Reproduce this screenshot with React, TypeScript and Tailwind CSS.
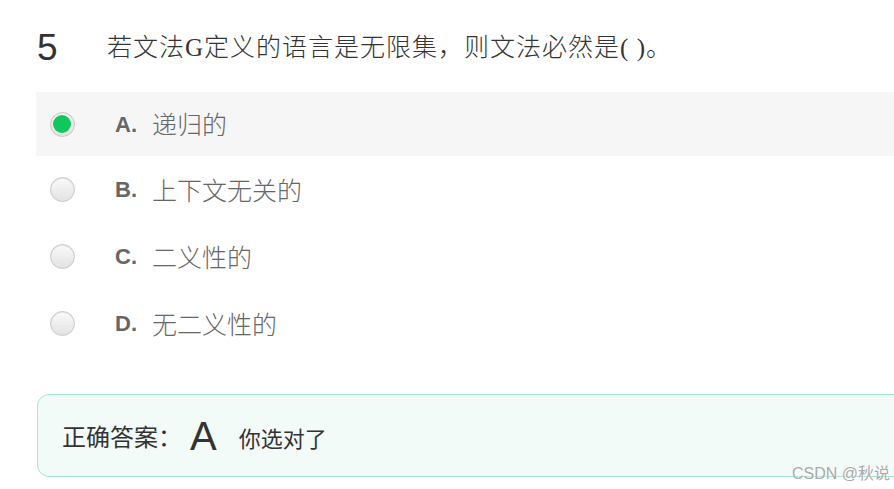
const OPTIONS = [
  { key: "A", text: "递归的", picked: true },
  { key: "B", text: "上下文无关的", picked: false },
  { key: "C", text: "二义性的", picked: false },
  { key: "D", text: "无二义性的", picked: false },
];

function Radio({ picked }: { picked: boolean }) {
  return (
    <span className="flex h-[25px] w-[25px] items-center justify-center rounded-full border border-[#c8c8c8] bg-gradient-to-b from-[#fafafa] to-[#e2e2e2] shadow-[inset_0_1px_1px_rgba(0,0,0,0.08)]">
      {picked ? <span className="h-[18px] w-[18px] rounded-full bg-[#11c65a]" /> : null}
    </span>
  );
}

export default function App() {
  return (
    <div className="relative h-[489px] w-[894px] overflow-hidden bg-white">
      <div className="flex items-center pt-[28px]">
        <span className="w-[107px] pl-[37px] font-['Liberation_Sans',Arial,sans-serif] text-[37px] leading-[40px] text-[#333]">
          5
        </span>
        <span className="font-['Liberation_Serif','Noto_Sans_CJK_SC',serif] text-[25px] font-light leading-[40px] tracking-[1px] text-[#333]">
          若文法G定义的语言是无限集，则文法必然是( )。
        </span>
      </div>

      <div className="mt-[24px] ml-[36px]">
        {OPTIONS.map((option) => (
          <div
            key={option.key}
            className={`flex items-center ${option.picked ? "h-[64px] bg-[#f6f6f6]" : "h-[67px]"}`}
          >
            <span className="flex w-[79px] justify-center pr-[27px]">
              <Radio picked={option.picked} />
            </span>
            <span className="w-[37px] font-['Liberation_Sans',Arial,sans-serif] text-[22px] font-bold text-[#666]">
              {option.key}.
            </span>
            <span className="font-['Noto_Sans_CJK_SC',sans-serif] text-[25px] font-light text-[#666]">
              {option.text}
            </span>
          </div>
        ))}
      </div>

      <div className="mt-[37px] ml-[37px] flex h-[83px] w-[880px] items-center rounded-[12px] border border-[#a6e6cc] bg-[#f3fbf8] pl-[24px]">
        <span className="font-['Noto_Sans_CJK_SC',sans-serif] text-[24px] text-[#333]">正确答案：</span>
        <span className="ml-[8px] font-['Liberation_Sans',Arial,sans-serif] text-[40px] leading-none text-[#333]">A</span>
        <span className="ml-[22px] mt-[4px] font-['Noto_Sans_CJK_SC',sans-serif] text-[22px] text-[#333]">你选对了</span>
      </div>

      <span className="absolute top-[462px] left-[792px] font-['Liberation_Sans','Noto_Sans_CJK_SC',sans-serif] text-[16px] text-[#aaa] [text-shadow:0_0_2px_#fff]">
        CSDN @秋说
      </span>
    </div>
  );
}
